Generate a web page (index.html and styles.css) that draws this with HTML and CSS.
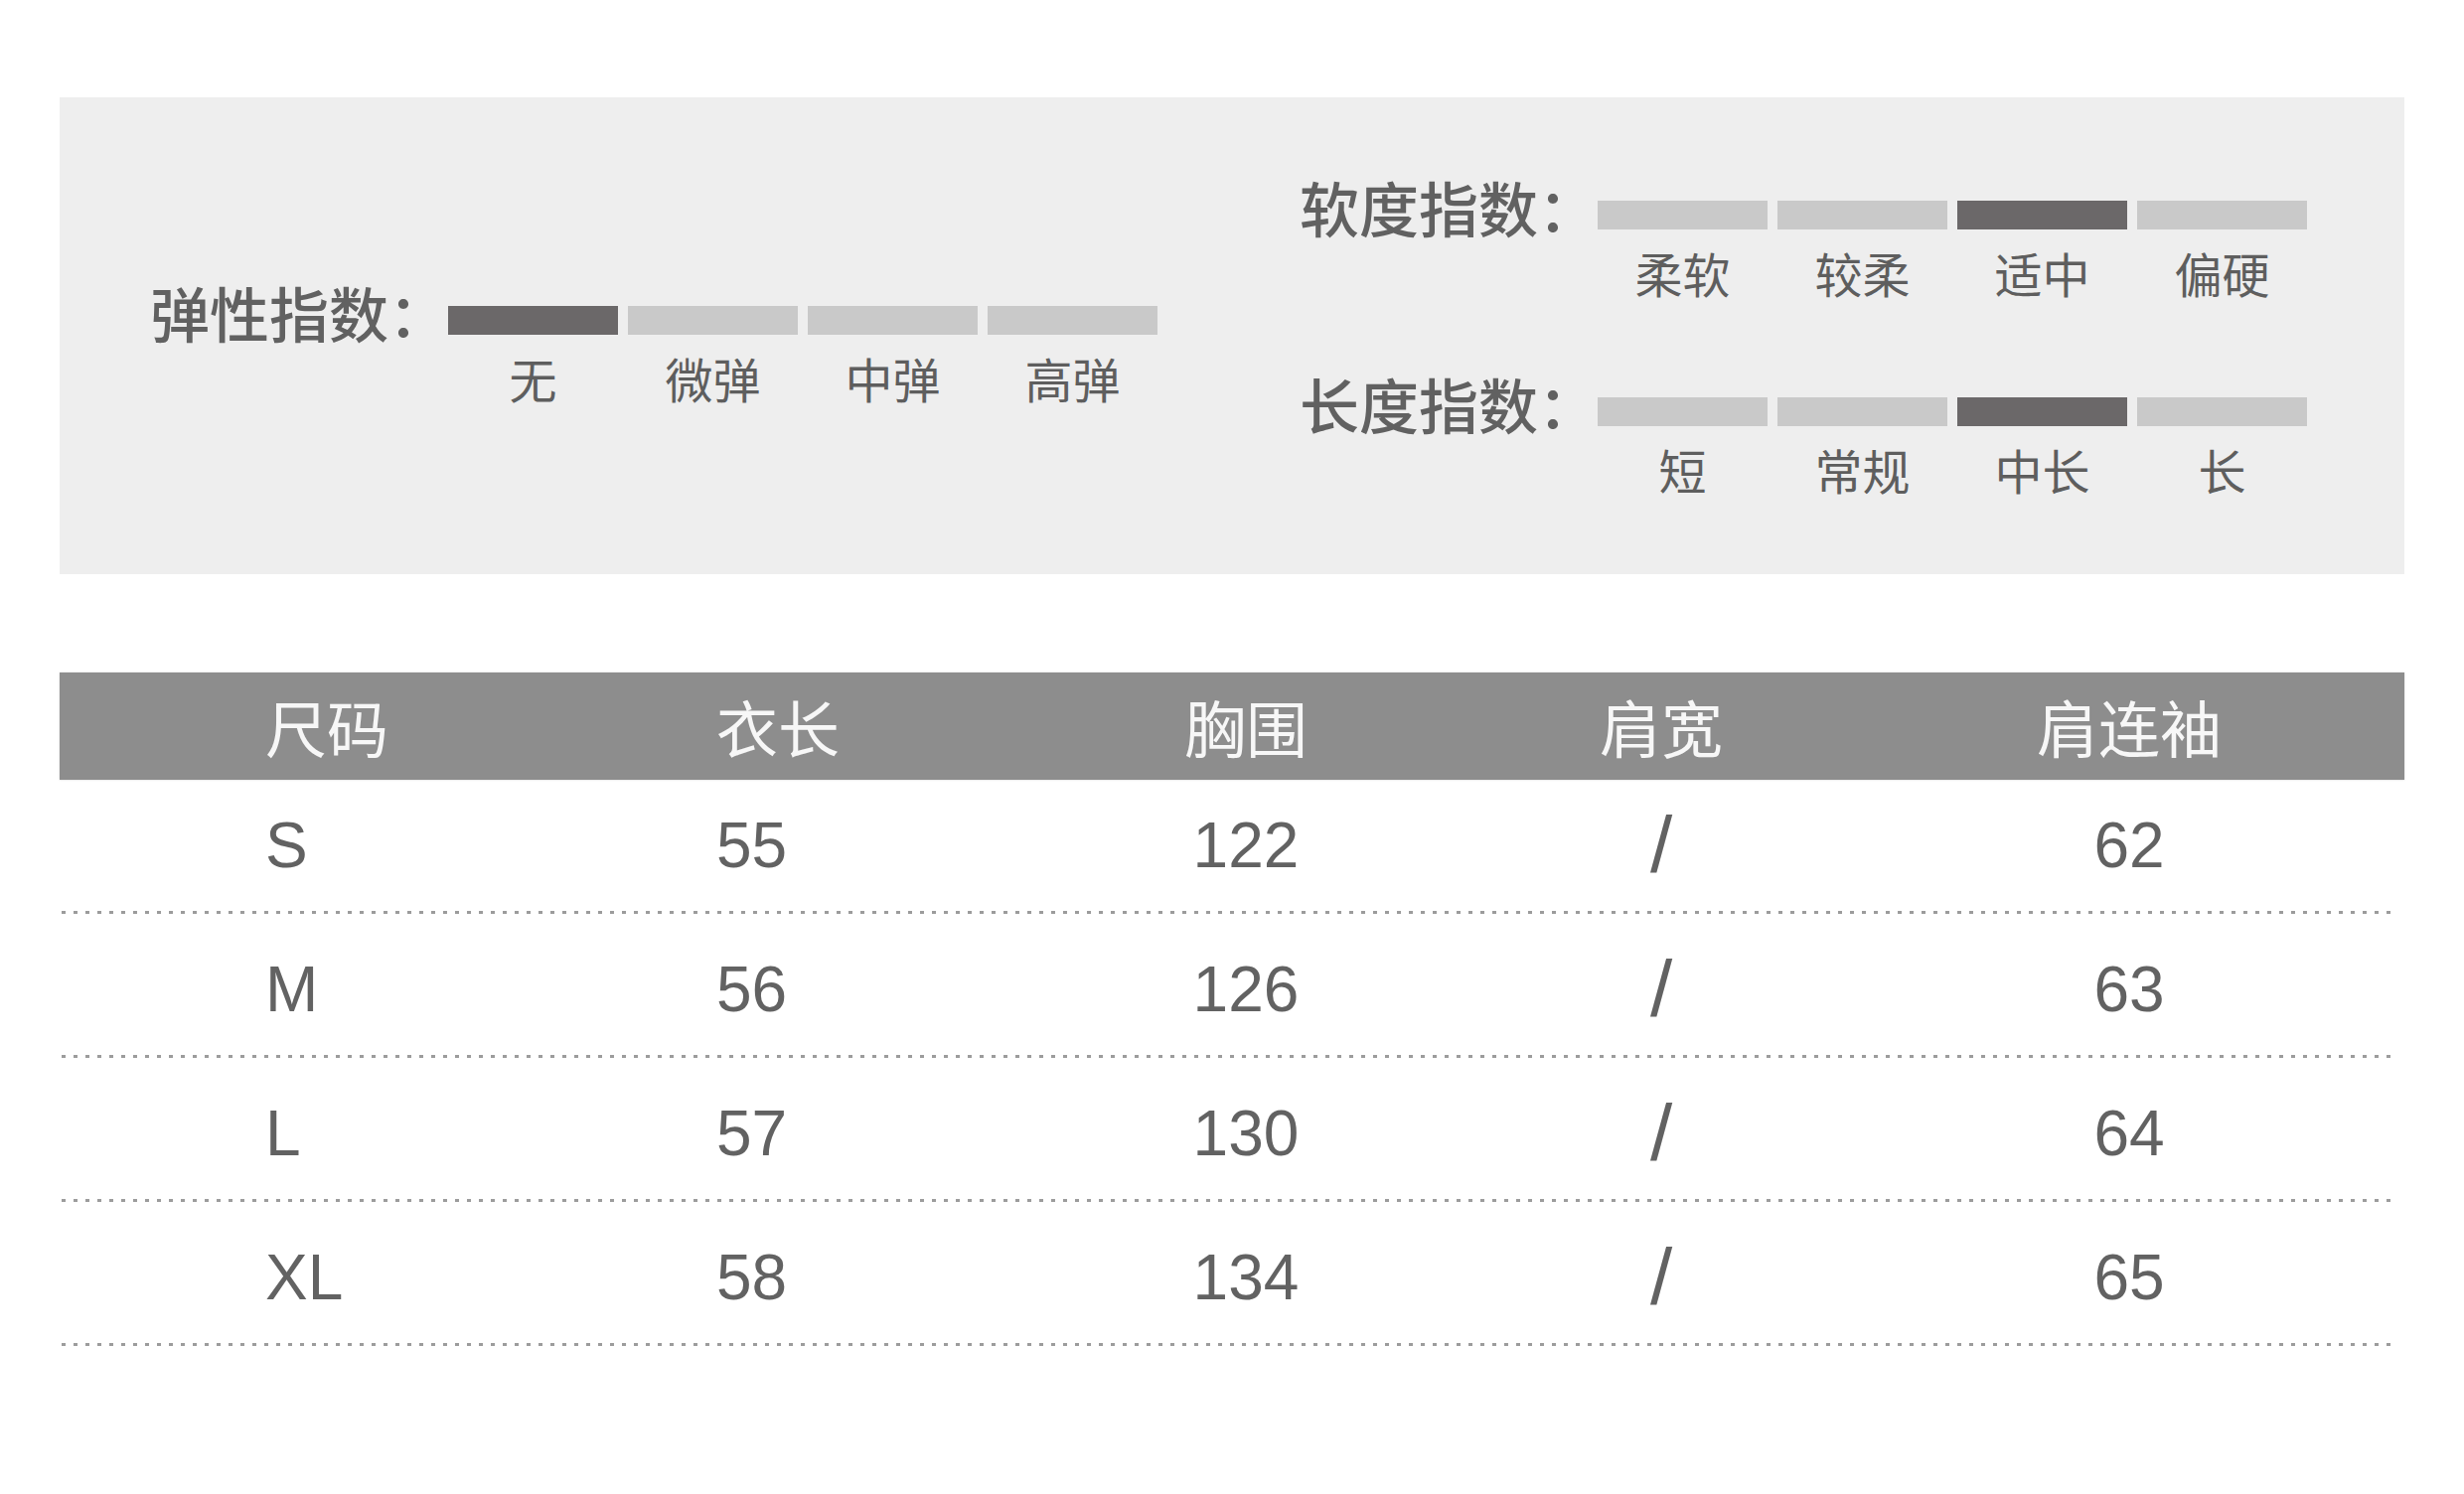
FILE: index.html
```html
<!DOCTYPE html>
<html lang="zh-CN">
<head>
<meta charset="utf-8">
<title>尺码信息</title>
<link rel="stylesheet" href="styles.css">
</head>
<body>
<div class="page">
  <section class="panel">
    <div class="indicator elastic">
      <div class="ind-label">弹性指数：</div>
      <div class="bars">
        <span class="bar on"></span><span class="bar"></span><span class="bar"></span><span class="bar"></span>
      </div>
      <div class="ticks"><span>无</span><span>微弹</span><span>中弹</span><span>高弹</span></div>
    </div>
    <div class="right-col">
      <div class="indicator">
        <div class="ind-label">软度指数：</div>
        <div class="bars">
          <span class="bar"></span><span class="bar"></span><span class="bar on"></span><span class="bar"></span>
        </div>
        <div class="ticks"><span>柔软</span><span>较柔</span><span>适中</span><span>偏硬</span></div>
      </div>
      <div class="indicator">
        <div class="ind-label">长度指数：</div>
        <div class="bars">
          <span class="bar"></span><span class="bar"></span><span class="bar on"></span><span class="bar"></span>
        </div>
        <div class="ticks"><span>短</span><span>常规</span><span>中长</span><span>长</span></div>
      </div>
    </div>
  </section>

  <section class="size-table">
    <div class="thead">
      <div class="c c1">尺码</div>
      <div class="c c2">衣长</div>
      <div class="c c3">胸围</div>
      <div class="c c4">肩宽</div>
      <div class="c c5">肩连袖</div>
    </div>
    <div class="tbody">
      <div class="tr">
        <div class="c c1">S</div><div class="c c2">55</div><div class="c c3">122</div><div class="c c4 na">/</div><div class="c c5">62</div>
      </div>
      <div class="tr">
        <div class="c c1">M</div><div class="c c2">56</div><div class="c c3">126</div><div class="c c4 na">/</div><div class="c c5">63</div>
      </div>
      <div class="tr">
        <div class="c c1">L</div><div class="c c2">57</div><div class="c c3">130</div><div class="c c4 na">/</div><div class="c c5">64</div>
      </div>
      <div class="tr">
        <div class="c c1">XL</div><div class="c c2">58</div><div class="c c3">134</div><div class="c c4 na">/</div><div class="c c5">65</div>
      </div>
    </div>
  </section>
</div>
</body>
</html>
```

FILE: styles.css
```css
html, body {
  margin: 0;
  padding: 0;
  background: #ffffff;
}

body {
  font-family: "Noto Sans CJK SC", "Liberation Sans", sans-serif;
  color: #5a5a5a;
}

.page {
  width: 2480px;
  height: 1504px;
  box-sizing: border-box;
  padding: 98px 60px 0 60px;
}

/* ---------- indicator panel ---------- */
.panel {
  height: 480px;
  background: #eeeeee;
  box-sizing: border-box;
  padding: 88px 98px 0 91px;
  display: flex;
  justify-content: space-between;
  align-items: flex-start;
}

.indicator {
  display: grid;
  grid-template-columns: 300px 714px;
  grid-template-rows: 60px auto;
}

.indicator.elastic {
  margin-top: 106px;
}

.right-col {
  display: flex;
  flex-direction: column;
  gap: 86px;
}

.ind-label {
  grid-column: 1;
  grid-row: 1;
  margin-top: -8px;
  font-size: 60px;
  line-height: 60px;
  white-space: nowrap;
  color: #616161;
  font-weight: 500;
}

.bars {
  grid-column: 2;
  grid-row: 1;
  align-self: center;
  display: grid;
  grid-template-columns: repeat(4, 171px);
  gap: 10px;
}

.bar {
  display: block;
  height: 29px;
  background: #c9c9c9;
}

.bar.on {
  background: #6b6869;
}

.ticks {
  grid-column: 2;
  grid-row: 2;
  margin-top: 4px;
  display: grid;
  grid-template-columns: repeat(4, 171px);
  gap: 10px;
  font-size: 48px;
  line-height: 48px;
  text-align: center;
  color: #5e5e5e;
}

/* ---------- size table ---------- */
.size-table {
  margin-top: 99px;
}

.thead,
.tr {
  display: grid;
  grid-template-columns: 454px 343px 380px 456px 486px;
  padding: 0 34px 0 207px;
  align-items: center;
}

.thead {
  height: 108px;
  background: #8d8d8d;
  box-shadow: 0 0 2px rgba(0, 0, 0, 0.18);
  color: #f7f7f7;
  font-size: 62px;
  line-height: 1;
}

.tbody {
  display: flex;
  flex-direction: column;
  gap: 10px;
}

.tr {
  height: 135px;
  box-sizing: border-box;
  padding-bottom: 3px;
  font-family: "Liberation Sans", "Noto Sans CJK SC", sans-serif;
  font-size: 64px;
  line-height: 1;
  color: #626262;
  background-image: repeating-linear-gradient(90deg, #9c9c9c 0 4px, transparent 4px 12px);
  background-size: calc(100% - 13px) 3px;
  background-position: 2px bottom;
  background-repeat: no-repeat;
}

.c1, .c2 {
  text-align: left;
}

.c3, .c4, .c5 {
  text-align: center;
}

.tr .na {
  font-size: 80px;
}
```
